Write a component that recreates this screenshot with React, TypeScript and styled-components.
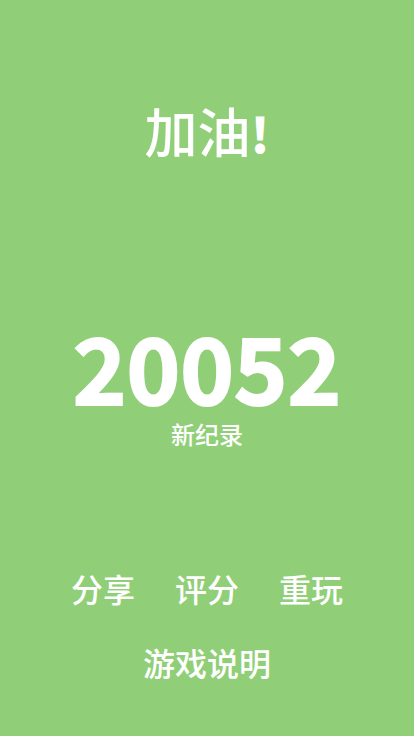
import React from "react";
import styled, { createGlobalStyle } from "styled-components";

const GlobalStyle = createGlobalStyle`
  *, *::before, *::after { box-sizing: border-box; }
  body {
    margin: 0;
    background: #90cf78;
    color: #ffffff;
    font-family: "Noto Sans CJK SC", sans-serif;
  }
`;

const Screen = styled.main`
  min-height: 100vh;
  display: flex;
  flex-direction: column;
  align-items: center;
`;

const Title = styled.h1`
  margin: 94px 0 0;
  font-size: 53px;
  line-height: 72px;
  font-weight: 500;
`;

const Bang = styled.span`
  font-size: 48px;
  font-weight: 900;
`;

const Result = styled.section`
  margin-top: 142px;
  text-align: center;
`;

const Score = styled.p`
  margin: 0;
  font-size: 91px;
  line-height: 110px;
  font-weight: 700;
  -webkit-text-stroke: 2px currentColor;
`;

const Record = styled.p`
  margin: 0;
  font-size: 24px;
  line-height: 28px;
  font-weight: 500;
`;

const Menu = styled.nav`
  margin-top: 116px;
  display: flex;
  flex-direction: column;
  align-items: center;
  gap: 26px;
`;

const MenuRow = styled.div`
  display: flex;
  gap: 40px;
`;

const MenuButton = styled.button`
  padding: 0;
  border: 0;
  background: none;
  color: inherit;
  font-family: inherit;
  font-size: 32px;
  line-height: 48px;
  font-weight: 500;
  cursor: pointer;
`;

export default function App() {
  return (
    <>
      <GlobalStyle />
      <Screen>
        <Title>加油<Bang>!</Bang></Title>
        <Result>
          <Score>20052</Score>
          <Record>新纪录</Record>
        </Result>
        <Menu aria-label="游戏菜单">
          <MenuRow>
            <MenuButton type="button">分享</MenuButton>
            <MenuButton type="button">评分</MenuButton>
            <MenuButton type="button">重玩</MenuButton>
          </MenuRow>
          <MenuButton type="button">游戏说明</MenuButton>
        </Menu>
      </Screen>
    </>
  );
}
